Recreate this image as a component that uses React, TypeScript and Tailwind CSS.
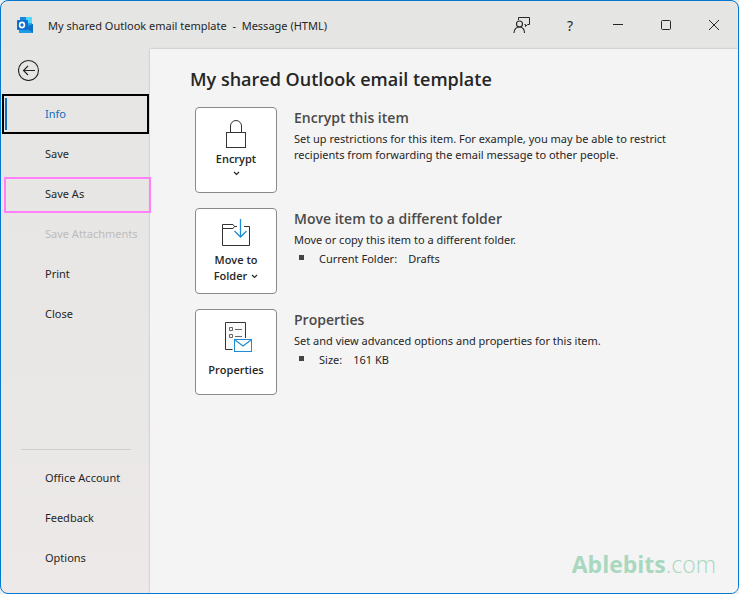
import type { ReactNode } from "react";
import clsx from "clsx";

const mainLinks = [
  { label: "Info", active: true },
  { label: "Save" },
  { label: "Save As", marked: true },
  { label: "Save Attachments", disabled: true },
  { label: "Print" },
  { label: "Close" },
];

const footerLinks = [
  { label: "Office Account" },
  { label: "Feedback" },
  { label: "Options" },
];

type NavItemProps = {
  label: string;
  active?: boolean;
  marked?: boolean;
  disabled?: boolean;
};

const OutlookLogo = () => (
  <svg width="16" height="16" viewBox="0 0 16 16" aria-hidden="true">
    <rect x="3" y="0" width="12" height="9" fill="#28a8ea" />
    <rect x="3" y="0" width="6" height="4" fill="#1a86d9" />
    <rect x="9" y="0" width="6" height="6" fill="#50d9ff" />
    <path d="M2 8h7l7-1v9H2z" fill="#1490df" />
    <path d="M9 11l7-4v9z" fill="#0f6fc4" />
    <path d="M2 13l7-2 7 5H2z" fill="#1f9be6" />
    <rect x="0" y="3" width="11" height="10" rx="1" fill="#0a6fcf" />
    <ellipse
      cx="5"
      cy="8"
      rx="2.4"
      ry="2.6"
      fill="none"
      stroke="#fff"
      strokeWidth="1.6"
    />
  </svg>
);

const BackIcon = () => (
  <svg width="22" height="22" fill="none" stroke="#262626" aria-hidden="true">
    <circle cx="10.500" cy="11.500" r="10" strokeWidth="1.1" />
    <path d="M17 11.500H5.500M10 7L5.500 11.500l4.500 4.500" strokeWidth="1.1" />
  </svg>
);

const FeedbackIcon = () => (
  <svg width="18" height="18" fill="none" stroke="#262626" aria-hidden="true">
    <path d="M5.500 4V1.500H16.500V8.500H14.500L12.500 10.500V8.500H11.500" />
    <circle cx="6.500" cy="8" r="3" strokeWidth="1.1" />
    <path d="M1 17c0-3.700 2.200-6 5.500-6s5 2.300 5 6" strokeWidth="1.1" />
  </svg>
);

const MinimizeIcon = () => (
  <svg width="10" height="12" stroke="#262626" aria-hidden="true">
    <path d="M0 5.500H10" />
  </svg>
);

const MaximizeIcon = () => (
  <svg width="12" height="12" fill="none" stroke="#262626" aria-hidden="true">
    <rect x="1.500" y="1.500" width="9" height="9" rx="1" />
  </svg>
);

const CloseIcon = () => (
  <svg width="12" height="12" stroke="#262626" aria-hidden="true">
    <path d="M1 1l10 10M11 1L1 11" />
  </svg>
);

const ChevronIcon = () => (
  <svg width="7" height="5" fill="none" stroke="#262626" aria-hidden="true">
    <path d="M1 1l2.500 2.500L6 1" strokeWidth="1.200" />
  </svg>
);

const LockIcon = () => (
  <svg width="32" height="32" fill="none" stroke="#333" aria-hidden="true">
    <rect x="6.500" y="14.500" width="19" height="15" />
    <path d="M10.500 14V8a5.500 5.500 0 0 1 11 0v6" />
  </svg>
);

const FolderIcon = () => (
  <svg width="32" height="32" fill="none" aria-hidden="true">
    <path
      d="M17 7.500H14.500L13 5.500H2.500V26.500H29.500V7.500H24M2.500 9.500H13L14.500 7.500"
      stroke="#333"
    />
    <path d="M20.500 0V17M14.500 12l6 6 6-6" stroke="#1e8bd8" strokeWidth="1.300" />
  </svg>
);

const PropertiesIcon = () => (
  <svg width="32" height="32" fill="none" aria-hidden="true">
    <path d="M12.500 29.500H5.500V2.500H25.500V18" fill="#fafafa" stroke="#333" />
    <path d="M9.500 7.500h3v3h-3zM9.500 14.500h3v3h-3zM15 9.500H22M15 16.500H22" stroke="#666" />
    <rect x="14.500" y="19.500" width="17" height="12" fill="#fff" stroke="#1e8bd8" />
    <path d="M15 20l8 6 8-6" stroke="#1e8bd8" strokeWidth="1.200" />
  </svg>
);

const NavItem = ({ label, active, marked, disabled }: NavItemProps) => (
  <li className="relative h-10 pl-px">
    <button
      type="button"
      disabled={disabled}
      className={clsx(
        "flex h-full w-full items-center border-2 text-left",
        active ? "border-black text-[#0f6cbd]" : "border-transparent",
        disabled && "text-[#bcbcbc]"
      )}
    >
      <span
        className={clsx("ml-px h-8 w-0.5", active && "bg-[#0f6cbd]")}
      ></span>
      <span className="pt-px pl-[38px] whitespace-nowrap">{label}</span>
    </button>
    {marked && (
      <span className="pointer-events-none absolute top-[3px] -right-0.5 bottom-px left-[3px] border-2 border-[#ff80f8]"></span>
    )}
  </li>
);

type SectionProps = {
  title: string;
  button: ReactNode;
  children: ReactNode;
};

const Section = ({ title, button, children }: SectionProps) => (
  <section className="flex items-start gap-[17px]">
    <button
      type="button"
      className="flex h-[86px] w-[82px] shrink-0 flex-col items-center rounded border border-[#8a8a8a] bg-white pt-2.5 font-['Open_Sans','Noto_Sans',sans-serif] leading-4 font-semibold text-[#262626]"
    >
      {button}
    </button>
    <div className="min-w-0 flex-1 leading-4">
      <h2 className="pb-0.5 font-['Open_Sans','Noto_Sans',sans-serif] text-[14px] leading-[22px] font-semibold text-[#4a4a4a]">
        {title}
      </h2>
      {children}
    </div>
  </section>
);

type DetailProps = {
  name: string;
  value: string;
};

const Detail = ({ name, value }: DetailProps) => (
  <dl className="flex items-center pt-[3px] pl-[5px]">
    <span className="mr-[15px] mb-[3px] h-[5px] w-[5px] bg-[#444]"></span>
    <dt className="mr-[11px]">{name}</dt>
    <dd>{value}</dd>
  </dl>
);

const App = () => {
  return (
    <div className="min-h-screen bg-[#e8eef2] font-['Noto_Sans','Open_Sans',sans-serif] text-[11px] text-[#262626]">
      <div className="flex min-h-screen flex-col overflow-hidden rounded-lg border border-[#0078d4] bg-linear-to-b from-[#e5e5e3] to-[#ece9e8]">
        <header className="flex h-12 shrink-0 items-center pl-4">
          <OutlookLogo />
          <h1 className="flex-1 pt-0.5 pl-[15px] whitespace-pre">
            {"My shared Outlook email template  -  Message (HTML)"}
          </h1>
          <div className="flex">
            <button
              type="button"
              aria-label="Feedback"
              className="flex h-12 w-12 items-center justify-center"
            >
              <FeedbackIcon />
            </button>
            <button
              type="button"
              aria-label="Help"
              className="flex h-12 w-12 items-center justify-center text-[14px]"
            >
              ?
            </button>
            <button
              type="button"
              aria-label="Minimize"
              className="flex h-12 w-12 items-center justify-center"
            >
              <MinimizeIcon />
            </button>
            <button
              type="button"
              aria-label="Maximize"
              className="flex h-12 w-12 items-center justify-center"
            >
              <MaximizeIcon />
            </button>
            <button
              type="button"
              aria-label="Close window"
              className="flex h-12 w-12 items-center justify-center"
            >
              <CloseIcon />
            </button>
          </div>
        </header>

        <div className="flex flex-1">
          <nav className="flex w-[149px] shrink-0 flex-col pb-[15px]">
            <button
              type="button"
              aria-label="Back"
              className="mt-2.5 mb-[13px] ml-[17px] w-fit"
            >
              <BackIcon />
            </button>
            <ul className="mr-px">
              {mainLinks.map((link) => (
                <NavItem key={link.label} {...link} />
              ))}
            </ul>
            <hr className="mt-auto mr-[19px] mb-2 ml-5 border-[#cfcfcf]" />
            <ul className="mr-px">
              {footerLinks.map((link) => (
                <NavItem key={link.label} {...link} />
              ))}
            </ul>
          </nav>

          <main className="flex flex-1 flex-col bg-[#f4f4f4] pt-4 pr-[22px] pb-[13px] pl-10 font-['Noto_Sans','Open_Sans',sans-serif] shadow-[0_0_2px_rgba(0,0,0,0.25)]">
            <h1 className="font-['Open_Sans','Noto_Sans',sans-serif] text-[18px] leading-7 font-semibold">
              My shared Outlook email template
            </h1>
            <div className="flex flex-col gap-[15px] pt-3.5 pl-[5px]">
              <Section
                title="Encrypt this item"
                button={
                  <>
                    <LockIcon />
                    <span className="pt-px">Encrypt</span>
                    <span className="pt-1">
                      <ChevronIcon />
                    </span>
                  </>
                }
              >
                <p className="max-w-[400px]">
                  Set up restrictions for this item. For example, you may be
                  able to restrict recipients from forwarding the email message
                  to other people.
                </p>
              </Section>

              <Section
                title="Move item to a different folder"
                button={
                  <>
                    <FolderIcon />
                    <span className="pt-px">Move to</span>
                    <span className="flex items-center gap-1">
                      Folder <ChevronIcon />
                    </span>
                  </>
                }
              >
                <p>Move or copy this item to a different folder.</p>
                <Detail name="Current Folder:" value="Drafts" />
              </Section>

              <Section
                title="Properties"
                button={
                  <>
                    <PropertiesIcon />
                    <span className="pt-2.5">Properties</span>
                  </>
                }
              >
                <p>
                  Set and view advanced options and properties for this item.
                </p>
                <Detail name="Size:" value="161 KB" />
              </Section>
            </div>
            <p className="mt-auto self-end font-['Open_Sans','Noto_Sans',sans-serif] text-[23px] leading-8 text-[#a9d8c0]">
              <span className="font-bold">Ablebits</span>
              <span className="font-light">.com</span>
            </p>
          </main>
        </div>
      </div>
    </div>
  );
};

export default App;
